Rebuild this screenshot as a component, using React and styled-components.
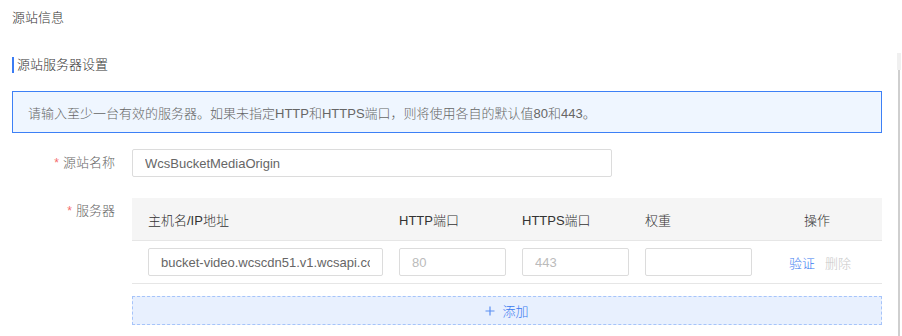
import React from "react";
import styled, { createGlobalStyle } from "styled-components";

const Global = createGlobalStyle`
  html, body { margin: 0; padding: 0; background: #fff; }
  body {
    font-family: "Liberation Sans", Arial, "Noto Sans CJK SC", sans-serif;
    font-size: 13px;
    font-weight: 300;
    color: #333;
    width: 902px;
    height: 336px;
    overflow: hidden;
  }
  * { box-sizing: border-box; }
`;

const Page = styled.div`
  width: 902px;
  height: 336px;
  display: flex;
  flex-direction: column;
`;

const Header = styled.div`
  height: 53px;
  padding: 8px 0 0 12px;
  line-height: 20px;
  font-size: 13px;
  color: #333;
`;

const Body = styled.div`
  flex: 1;
  display: flex;
`;

const Content = styled.div`
  flex: 1;
  padding: 4px 15px 0 12px;
`;

const ScrollTrack = styled.div`
  width: 4px;
  margin-right: 1px;
  background: linear-gradient(to bottom, #f0f0f0 0, #f0f0f0 17px, transparent 17px);
  display: flex;
  justify-content: center;
  padding-top: 17px;
  &::after {
    content: "";
    width: 2px;
    background: #cfcfcf;
  }
`;

const SubTitle = styled.div`
  border-left: 2px solid #3b7cf4;
  padding-left: 3px;
  height: 16px;
  line-height: 16px;
  font-size: 13px;
  color: #333;
`;

const Alert = styled.div`
  margin-top: 18px;
  height: 42px;
  border: 1px solid #3d80f6;
  background: #eff6ff;
  padding-left: 15px;
  display: flex;
  align-items: center;
  color: #666;
  font-size: 13px;
`;

const FormRow = styled.div`
  display: flex;
  margin-top: ${(p) => p.$top}px;
`;

const Label = styled.div`
  width: 120px;
  flex: none;
  text-align: right;
  padding-right: 17px;
  line-height: 28px;
  color: #666;
  font-size: 13px;
  margin-top: ${(p) => p.$offset || 0}px;
`;

const Star = styled.span`
  color: #f56c6c;
  margin-right: 4px;
  font-size: 12px;
`;

const Input = styled.input`
  width: ${(p) => p.$w}px;
  height: 28px;
  border: 1px solid #dcdcdc;
  border-radius: 2px;
  padding: 0 12px;
  font-family: "Liberation Sans", Arial, "Noto Sans CJK SC", sans-serif;
  font-size: 13px;
  color: #666;
  outline: none;
  background: #fff;
  &::placeholder { color: #bbb; }
`;

const FieldCol = styled.div`
  flex: 1;
`;

const Grid = styled.div`
  display: grid;
  grid-template-columns: 251px 123px 123px 123px 130px;
  align-items: center;
  height: ${(p) => p.$h}px;
  background: ${(p) => p.$bg || "#fff"};
  border-bottom: 1px solid #e6e6e6;
`;

const HeadCell = styled.div`
  padding-left: ${(p) => (p.$center ? 0 : 16)}px;
  text-align: ${(p) => (p.$center ? "center" : "left")};
  color: #333;
  font-size: 13px;
`;

const Cell = styled.div`
  padding-left: 16px;
  display: flex;
`;

const Actions = styled.div`
  display: flex;
  justify-content: center;
  gap: 10px;
  padding-left: 6px;
`;

const Link = styled.span`
  color: ${(p) => (p.$disabled ? "#c8c8c8" : "#3a7af0")};
  font-size: 13px;
  cursor: pointer;
`;

const AddButton = styled.div`
  margin-top: 12px;
  height: 29px;
  border: 1px dashed #a6c4fa;
  background: #e8f0fe;
  display: flex;
  align-items: center;
  justify-content: center;
  gap: 7px;
  color: #3a7af0;
  font-size: 13px;
`;

const Plus = () => (
  <svg width="10" height="10" viewBox="0 0 10 10">
    <path d="M5 0.5V9.5M0.5 5H9.5" stroke="#5b8ff2" strokeWidth="1.2" />
  </svg>
);

export default function App() {
  return (
    <>
      <Global />
      <Page>
        <Header>源站信息</Header>
        <Body>
          <Content>
            <SubTitle>源站服务器设置</SubTitle>
            <Alert>请输入至少一台有效的服务器。如果未指定HTTP和HTTPS端口，则将使用各自的默认值80和443。</Alert>
            <FormRow $top={16}>
              <Label>
                <Star>*</Star>源站名称
              </Label>
              <Input $w={480} defaultValue="WcsBucketMediaOrigin" />
            </FormRow>
            <FormRow $top={21}>
              <Label $offset={-1}>
                <Star>*</Star>服务器
              </Label>
              <FieldCol>
                <Grid $h={43} $bg="#f5f5f5">
                  <HeadCell>主机名/IP地址</HeadCell>
                  <HeadCell>HTTP端口</HeadCell>
                  <HeadCell>HTTPS端口</HeadCell>
                  <HeadCell>权重</HeadCell>
                  <HeadCell $center>操作</HeadCell>
                </Grid>
                <Grid $h={43}>
                  <Cell>
                    <Input $w={235} defaultValue="bucket-video.wcscdn51.v1.wcsapi.com" />
                  </Cell>
                  <Cell>
                    <Input $w={107} placeholder="80" />
                  </Cell>
                  <Cell>
                    <Input $w={107} placeholder="443" />
                  </Cell>
                  <Cell>
                    <Input $w={107} />
                  </Cell>
                  <Actions>
                    <Link>验证</Link>
                    <Link $disabled>删除</Link>
                  </Actions>
                </Grid>
                <AddButton>
                  <Plus />
                  添加
                </AddButton>
              </FieldCol>
            </FormRow>
          </Content>
          <ScrollTrack />
        </Body>
      </Page>
    </>
  );
}
